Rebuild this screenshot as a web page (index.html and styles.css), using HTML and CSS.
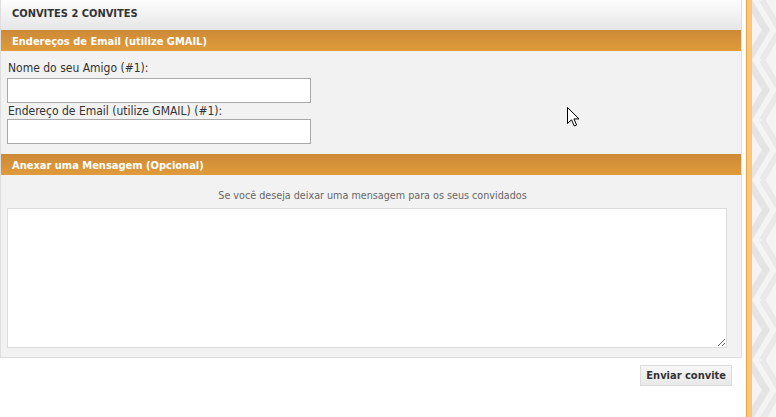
FILE: index.html
```html
<!DOCTYPE html>
<html lang="pt-BR">
<head>
    <meta charset="UTF-8">
    <meta name="viewport" content="width=device-width, initial-scale=1.0">
    <title>Convites</title>
    <link rel="stylesheet" href="styles.css">
</head>
<body>
    <div class="page">
        <div class="main">
            <form class="panel">
                <div class="panel-title">CONVITES 2 CONVITES</div>

                <div class="section-bar">Endereços de Email (utilize GMAIL)</div>
                <div class="fields">
                    <label class="field-label" for="nome1">Nome do seu Amigo (#1):</label>
                    <input class="field-input" type="text" id="nome1">
                    <label class="field-label" for="email1">Endereço de Email (utilize GMAIL) (#1):</label>
                    <input class="field-input" type="text" id="email1">
                </div>

                <div class="section-bar">Anexar uma Mensagem (Opcional)</div>
                <div class="message">
                    <p class="hint">Se você deseja deixar uma mensagem para os seus convidados</p>
                    <textarea class="message-box"></textarea>
                </div>
            </form>
            <div class="actions">
                <button class="btn" type="button">Enviar convite</button>
            </div>
        </div>
        <div class="gap"></div>
        <div class="stripe"></div>
        <div class="pattern">
            <svg width="24" height="417" viewBox="0 0 24 417" preserveAspectRatio="none">
                <defs>
                    <pattern id="chev" width="24" height="60" patternUnits="userSpaceOnUse">
                        <path d="M-4 0 L14 30 L-4 60" fill="none" stroke="#e4e4e4" stroke-width="7"/>
                        <path d="M10 0 L28 30 L10 60" fill="none" stroke="#e9e9e9" stroke-width="6"/>
                    </pattern>
                </defs>
                <rect width="24" height="417" fill="#f4f4f4"/>
                <rect width="24" height="417" fill="url(#chev)"/>
            </svg>
        </div>
    </div>

    <svg class="cursor" width="13" height="20" viewBox="0 0 13 20">
        <path d="M0.5 0.5 L0.5 16.5 L4.5 12.8 L7.3 19 L9.6 18 L6.9 11.9 L12 11.9 Z" fill="#fff" stroke="#000" stroke-width="1"/>
    </svg>
</body>
</html>
```

FILE: styles.css
```css
body {
    margin: 0;
    background-color: #fff;
    font-family: 'DejaVu Sans Condensed', 'DejaVu Sans', sans-serif;
    color: #333;
}

.page {
    display: flex;
    height: 417px;
    overflow: hidden;
}

.main {
    width: 742px;
    flex-shrink: 0;
}

.panel {
    margin: 0;
    border: 1px solid #dedede;
    border-top: 0;
    background-color: #f2f2f2;
}

.panel-title {
    height: 30px;
    line-height: 27px;
    padding-left: 11px;
    font-size: 11px;
    font-weight: bold;
    color: #333;
    background: linear-gradient(#fdfdfd, #e6e6e6);
}

.section-bar {
    height: 21px;
    line-height: 23px;
    overflow: hidden;
    padding-left: 11px;
    font-size: 11px;
    font-weight: bold;
    color: #fff;
    background: linear-gradient(#cd8a36, #e09b3b);
}

.fields {
    display: flex;
    flex-direction: column;
    align-items: flex-start;
    padding: 9px 0 10px 6px;
}

.field-label {
    font-size: 12px;
    line-height: 16px;
    color: #333;
    margin-left: 1px;
}

.field-label:first-child {
    margin-bottom: 2px;
}

.field-input {
    box-sizing: border-box;
    width: 304px;
    height: 25px;
    margin: 0;
    border: 1px solid #a9a9a9;
    background-color: #fff;
    padding: 2px 4px;
}

.message {
    padding: 14px 13px 9px 6px;
}

.hint {
    margin: 0 0 5px 0;
    padding-left: 10px;
    text-align: center;
    font-size: 10.7px;
    line-height: 14px;
    color: #666;
}

.message-box {
    display: block;
    box-sizing: border-box;
    width: 720px;
    height: 140px;
    margin: 0;
    border: 1px solid #dcdcdc;
    background-color: #fff;
}

.actions {
    display: flex;
    justify-content: flex-end;
    padding: 7px 10px 0 0;
}

.btn {
    height: 21px;
    padding: 0 5px;
    font-family: 'DejaVu Sans Condensed', 'DejaVu Sans', sans-serif;
    font-size: 11px;
    font-weight: bold;
    color: #333;
    border: 1px solid #dcdcdc;
    background: linear-gradient(#f7f7f7, #e8e8e8);
}

.gap {
    width: 4px;
    flex-shrink: 0;
}

.stripe {
    width: 5px;
    flex-shrink: 0;
    background-color: #fdc675;
    border-left: 1px solid #e9a44c;
}

.pattern {
    flex: 1;
    display: flex;
}

.cursor {
    position: absolute;
    left: 567px;
    top: 107px;
}
```
